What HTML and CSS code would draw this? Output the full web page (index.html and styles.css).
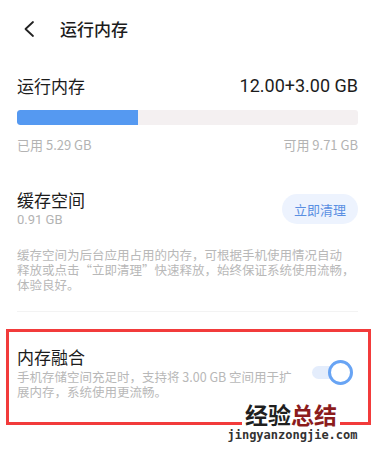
FILE: index.html
```html
<!DOCTYPE html>
<html lang="zh-CN">
<head>
<meta charset="utf-8">
<title>运行内存</title>
<link rel="stylesheet" href="styles.css">
</head>
<body>
<div class="page">
  <header class="header">
    <svg class="back" width="14" height="18" viewBox="0 0 14 18"><path d="M11 2 L3.5 9 L11 16" fill="none" stroke="#222" stroke-width="1.8" stroke-linecap="round" stroke-linejoin="round"/></svg>
    <h1 class="title">运行内存</h1>
  </header>

  <main class="main">
    <div class="mem-row">
      <span class="label">运行内存</span>
      <span class="mem-value">12.00+3.00 GB</span>
    </div>
    <div class="bar"><div class="bar-fill" style="width:35.5%"></div></div>
    <div class="bar-labels">
      <span>已用 5.29 GB</span>
      <span>可用 9.71 GB</span>
    </div>

    <div class="cache-row">
      <div class="cache-text">
        <div class="label">缓存空间</div>
        <div class="cache-size">0.91 GB</div>
      </div>
      <button class="clean-btn">立即清理</button>
    </div>
    <p class="desc">缓存空间为后台应用占用的内存，可根据手机使用情况自动<br>释放或点击“立即清理”快速释放，始终保证系统使用流畅，<br>体验良好。</p>
    <div class="divider"></div>
  </main>

  <section class="fusion">
    <div class="fusion-text">
      <div class="label">内存融合</div>
      <p class="desc fusion-desc">手机存储空间充足时，支持将 3.00 GB 空间用于扩<br>展内存，系统使用更流畅。</p>
    </div>
    <div class="toggle"><span class="toggle-track"></span><span class="toggle-knob"></span></div>
  </section>

  <div class="watermark">
    <div class="wm-cn"><span class="wm-dark">经验</span><span class="wm-red">总结</span></div>
    <div class="wm-url">jingyanzongjie.com</div>
  </div>
</div>
</body>
</html>
```

FILE: styles.css
```css
* { box-sizing: border-box; }
html, body { margin: 0; padding: 0; background: #fff; }
body {
  font-family: "Noto Sans CJK SC", "Noto Sans", sans-serif;
  color: #1c1c1c;
  width: 375px;
  height: 453px;
  overflow: hidden;
}
.page { position: relative; width: 375px; height: 453px; }

.header {
  height: 57px;
  display: flex;
  align-items: center;
  padding-left: 22px;
}
.back { display: block; }
.title {
  margin: 0 0 0 24px;
  font-size: 17px;
  font-weight: 500;
  line-height: 24px;
}

.main { padding: 0 17px; }

.mem-row {
  margin-top: 17px;
  display: flex;
  justify-content: space-between;
  align-items: center;
  height: 24px;
}
.label { font-size: 17px; line-height: 24px; font-weight: 400; color: #1c1c1c; }
.mem-value { font-family: "Roboto", "Noto Sans", sans-serif; font-size: 18px; line-height: 24px; color: #1c1c1c; }

.bar {
  margin-top: 12px;
  height: 15px;
  background: #f4f0f1;
  border-radius: 3px;
  overflow: hidden;
}
.bar-fill { height: 100%; background: #5599f1; border-radius: 3px 0 0 3px; }

.bar-labels {
  margin-top: 11px;
  display: flex;
  justify-content: space-between;
  font-size: 13px;
  line-height: 18px;
  color: #b3b3b3;
}

.cache-row {
  margin-top: 34px;
  display: flex;
  justify-content: space-between;
  align-items: center;
}
.cache-size {
  font-family: "Roboto", "Noto Sans", sans-serif;
  font-size: 13px;
  line-height: 16px;
  color: #b3b3b3;
}
.clean-btn {
  width: 76px;
  height: 30px;
  border: none;
  border-radius: 15px;
  background: #edf3fe;
  color: #5a8fe2;
  font-family: "Noto Sans CJK SC", sans-serif;
  font-size: 13px;
  padding: 0;
  margin-top: 2px;
}

.desc {
  margin: 19px 0 0;
  font-size: 12.5px;
  line-height: 15px;
  color: #b8b8b8;
  white-space: nowrap;
}

.divider {
  margin-top: 19px;
  height: 1px;
  background: #f3f3f3;
}

.fusion {
  margin: 17px 4px 0 6px;
  border: 3px solid #f23b3b;
  padding: 13px 15px 23px 8px;
  display: flex;
  align-items: center;
  justify-content: space-between;
}
.fusion-desc { margin-top: 0; }

.toggle {
  position: relative;
  width: 41px;
  height: 25px;
  flex: none;
}
.toggle-track {
  position: absolute;
  left: 0;
  top: 6px;
  width: 36px;
  height: 13px;
  border-radius: 7px;
  background: #e4edfc;
}
.toggle-knob {
  position: absolute;
  right: 0;
  top: 0;
  width: 25px;
  height: 25px;
  border-radius: 50%;
  background: #fff;
  border: 3px solid #68a4f4;
}

.watermark {
  position: absolute;
  left: 225px;
  top: 401px;
  width: 135px;
  display: flex;
  flex-direction: column;
  align-items: center;
}
.wm-cn {
  background: #fff;
  padding: 0 3px;
  font-size: 23px;
  font-weight: 700;
  line-height: 26px;
  margin-left: -3px;
}
.wm-dark { color: #1f1f1f; }
.wm-red { color: #8c1c1c; }
.wm-url {
  font-family: "DejaVu Sans Mono", monospace;
  font-weight: 700;
  font-size: 12px;
  line-height: 14px;
  color: #333;
  margin-top: 1px;
}
```
